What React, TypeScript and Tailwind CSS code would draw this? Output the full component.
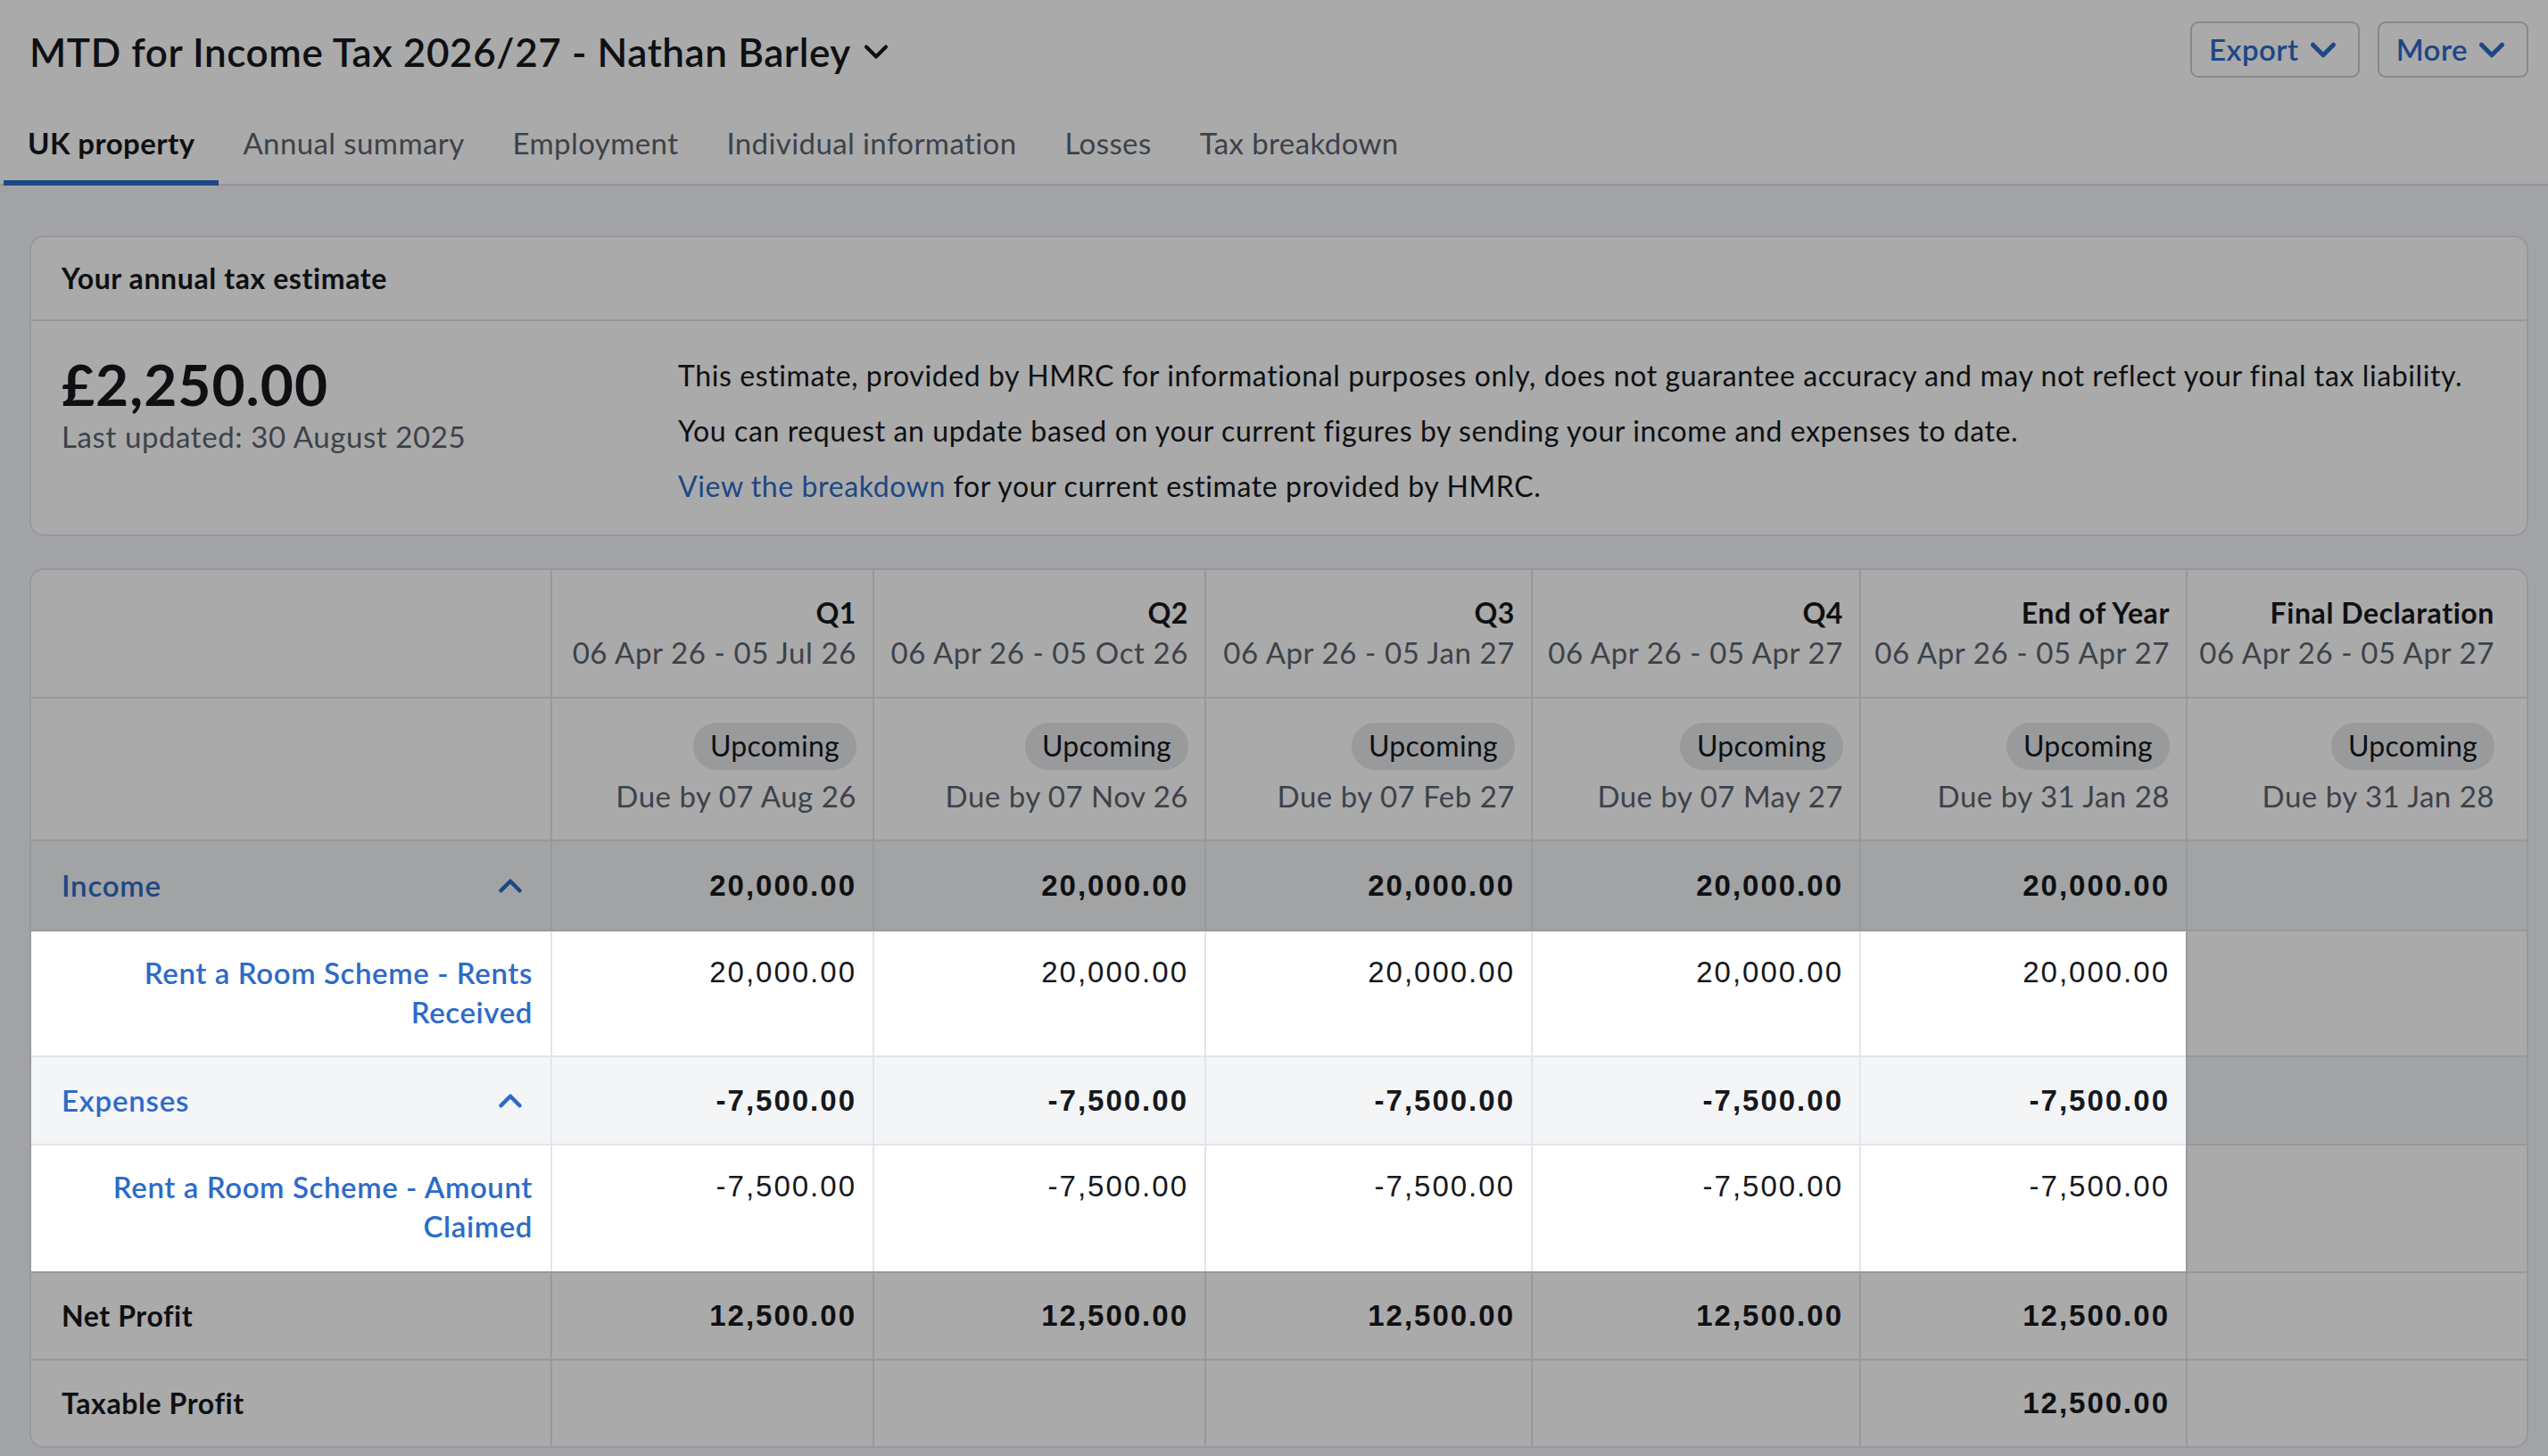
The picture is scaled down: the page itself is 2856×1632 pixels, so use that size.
import React from "react"

const FONT = "font-['Lato','Noto_Sans',sans-serif]"
const NUM = "font-['Liberation_Sans','Arial',sans-serif] text-[33px] tracking-[2px]"
const GRID = "grid grid-cols-[582px_361px_372px_366px_368px_366px_1fr]"

const periods = [
  { name: "Q1", range: "06 Apr 26 - 05 Jul 26", due: "Due by 07 Aug 26" },
  { name: "Q2", range: "06 Apr 26 - 05 Oct 26", due: "Due by 07 Nov 26" },
  { name: "Q3", range: "06 Apr 26 - 05 Jan 27", due: "Due by 07 Feb 27" },
  { name: "Q4", range: "06 Apr 26 - 05 Apr 27", due: "Due by 07 May 27" },
  { name: "End of Year", range: "06 Apr 26 - 05 Apr 27", due: "Due by 31 Jan 28" },
  { name: "Final Declaration", range: "06 Apr 26 - 05 Apr 27", due: "Due by 31 Jan 28" },
]

function Chevron({ up = false, className = "" }: { up?: boolean; className?: string }) {
  return (
    <svg viewBox="0 0 24 24" fill="none" stroke="currentColor" strokeLinecap="round" strokeLinejoin="round" className={className}>
      <path d={up ? "M6 15l6-6 6 6" : "M6 9l6 6 6-6"} />
    </svg>
  )
}

function Tab({ label, active = false }: { label: string; active?: boolean }) {
  return (
    <div
      className={`px-[27px] pb-[22px] -mb-[2px] border-b-[6px] text-[33px] leading-[40px] tracking-[0.4px] ${
        active ? "border-[#2d6bc8] font-bold text-[#16181d]" : "border-transparent text-[#5b6470]"
      }`}
    >
      {label}
    </div>
  )
}

function OutlineButton({ label }: { label: string }) {
  return (
    <button className="h-[63px] flex items-center pl-[19px] pr-[16px] border-2 border-[#c9ccd2] rounded-[9px] text-[33px] tracking-[0.5px] font-semibold text-[#2d6bc8]">
      {label}
      <Chevron className="w-[46px] h-[46px] ml-[4px] stroke-[2.6]" />
    </button>
  )
}

// cells that sit above the dim layer
const lit = "relative z-50"
const line = "border-[#e3e5ea]"
// last column keeps a wider right gutter
const padR = (i: number) => (i === 5 ? "pr-[36px]" : "pr-[18px]")

export default function App() {
  const five = (v: string) => [v, v, v, v, v, null]

  return (
    <div className={`${FONT} min-h-screen bg-[#f3f5f9] text-[#16181d]`}>
      {/* header */}
      <div className="bg-white">
        <div className="flex items-center justify-between pl-[33px] pr-[22px] pt-[24px]">
          <div className="flex items-center">
            <h1 className="text-[44px] leading-[56px] font-semibold tracking-[0.6px] mt-[4px]">MTD for Income Tax 2026/27 - Nathan Barley</h1>
            <Chevron className="w-[44px] h-[44px] ml-[6px] mt-[4px] stroke-[2.2]" />
          </div>
          <div className="flex gap-[20px]">
            <OutlineButton label="Export" />
            <OutlineButton label="More" />
          </div>
        </div>
        <nav className="flex pl-[4px] mt-[53px] border-b-2 border-[#dfe2e6]">
          <Tab label="UK property" active />
          <Tab label="Annual summary" />
          <Tab label="Employment" />
          <Tab label="Individual information" />
          <Tab label="Losses" />
          <Tab label="Tax breakdown" />
        </nav>
      </div>

      <main className="pl-[33px] pr-[22px] pt-[56px] flex flex-col gap-[36px]">
        {/* estimate card */}
        <section className={`bg-white border-2 ${line} rounded-[16px]`}>
          <div className={`h-[94px] flex items-center px-[34px] border-b-2 ${line}`}>
            <h2 className="text-[32px] font-bold leading-[40px] tracking-[0.6px]">Your annual tax estimate</h2>
          </div>
          <div className="flex px-[34px] pt-[30px] pb-[23px]">
            <div className="w-[691px] shrink-0">
              <div className="mt-[10px] text-[64px] leading-[62px] font-bold tracking-[1px]">£2,250.00</div>
              <div className="mt-[7px] text-[33px] leading-[40px] tracking-[0.6px] text-[#5b6470]">Last updated: 30 August 2025</div>
            </div>
            <div className="text-[32px] leading-[62px] tracking-[0.6px]">
              <p>This estimate, provided by HMRC for informational purposes only, does not guarantee accuracy and may not reflect your final tax liability.</p>
              <p>You can request an update based on your current figures by sending your income and expenses to date.</p>
              <p>
                <a className="text-[#2d6bc8]">View the breakdown</a> for your current estimate provided by HMRC.
              </p>
            </div>
          </div>
        </section>

        {/* period table */}
        <section className={`bg-white border-2 ${line} rounded-[16px] overflow-hidden`}>
          <div className={GRID}>
            <div className={`h-[144px] border-b-2 ${line}`} />
            {periods.map((p, i) => (
              <div key={p.name} className={`h-[144px] border-b-2 border-l-2 ${line} flex flex-col items-end justify-center ${padR(i)} pb-[2px]`}>
                <div className="text-[32px] leading-[45px] font-bold tracking-[0.6px]">{p.name}</div>
                <div className="text-[33px] leading-[45px] tracking-[0.6px] text-[#5b6470] whitespace-nowrap">{p.range}</div>
              </div>
            ))}
          </div>

          <div className={GRID}>
            <div className={`h-[160px] border-b-2 ${line}`} />
            {periods.map((p, i) => (
              <div key={p.name} className={`h-[160px] border-b-2 border-l-2 ${line} flex flex-col items-end justify-center ${padR(i)}`}>
                <span className="h-[53px] px-[19px] flex items-center rounded-full bg-[#e5e7eb] text-[32px] tracking-[0.3px]">Upcoming</span>
                <div className="mt-[7px] text-[33px] leading-[45px] tracking-[0.5px] text-[#5b6470] whitespace-nowrap">{p.due}</div>
              </div>
            ))}
          </div>

          {/* Income */}
          <div className={`${GRID} bg-[#f4f5f7]`}>
            <div className={`h-[101px] border-b-2 ${line} flex items-center justify-between pl-[34px] pr-[24px]`}>
              <span className="text-[33px] font-semibold tracking-[0.8px] text-[#2d6bc8]">Income</span>
              <Chevron up className="w-[42px] h-[42px] stroke-[2.6] text-[#2d6bc8]" />
            </div>
            {five("20,000.00").map((v, i) => (
              <div key={i} className={`h-[101px] border-b-2 border-l-2 ${line} flex items-center justify-end pr-[18px] ${NUM} font-bold`}>
                {v}
              </div>
            ))}
          </div>

          {/* Rents received */}
          <div className={GRID}>
            <div className={`${lit} bg-white h-[141px] border-b-2 ${line} pt-[24px] pr-[20px] pl-[60px] text-right text-[33px] leading-[44px] tracking-[0.6px] font-semibold text-[#2d6bc8]`}>
              Rent a Room Scheme - Rents Received
            </div>
            {five("20,000.00").map((v, i) => (
              <div
                key={i}
                className={`${v ? lit : ""} bg-white h-[141px] border-b-2 border-l-2 ${line} pt-[24px] pr-[18px] text-right leading-[44px] ${NUM}`}
              >
                {v}
              </div>
            ))}
          </div>

          {/* Expenses */}
          <div className={GRID}>
            <div className={`${lit} h-[99px] border-b-2 ${line} flex items-center justify-between pl-[34px] pr-[24px] bg-[#f4f5f7]`}>
              <span className="text-[33px] font-semibold tracking-[0.8px] text-[#2d6bc8]">Expenses</span>
              <Chevron up className="w-[42px] h-[42px] stroke-[2.6] text-[#2d6bc8]" />
            </div>
            {five("-7,500.00").map((v, i) => (
              <div
                key={i}
                className={`${v ? lit : ""} bg-[#f4f5f7] h-[99px] border-b-2 border-l-2 ${line} flex items-center justify-end pr-[18px] ${NUM} font-bold`}
              >
                {v}
              </div>
            ))}
          </div>

          {/* Amount claimed */}
          <div className={GRID}>
            <div className={`${lit} bg-white h-[141px] pt-[24px] pr-[20px] pl-[60px] text-right text-[33px] leading-[44px] tracking-[0.6px] font-semibold text-[#2d6bc8]`}>
              Rent a Room Scheme - Amount Claimed
            </div>
            {five("-7,500.00").map((v, i) => (
              <div
                key={i}
                className={`${v ? lit : ""} bg-white h-[141px] border-l-2 ${line} pt-[24px] pr-[18px] text-right leading-[44px] ${NUM}`}
              >
                {v}
              </div>
            ))}
          </div>

          {/* Net profit */}
          <div className={GRID}>
            <div className={`h-[100px] border-t-2 border-b-2 ${line} flex items-center pl-[34px] text-[32px] font-bold tracking-[0.6px]`}>Net Profit</div>
            {five("12,500.00").map((v, i) => (
              <div key={i} className={`h-[100px] border-t-2 border-b-2 border-l-2 ${line} flex items-center justify-end pr-[18px] ${NUM} font-bold`}>
                {v}
              </div>
            ))}
          </div>

          {/* Taxable profit */}
          <div className={GRID}>
            <div className="h-[96px] flex items-center pl-[34px] text-[32px] font-bold tracking-[0.6px]">Taxable Profit</div>
            {[null, null, null, null, "12,500.00", null].map((v, i) => (
              <div key={i} className={`h-[96px] border-l-2 ${line} flex items-center justify-end pr-[18px] ${NUM} font-bold`}>
                {v}
              </div>
            ))}
          </div>
        </section>
      </main>

      {/* dim layer over the page */}
      <div className="fixed inset-0 z-40 bg-black/[0.333]" />
    </div>
  )
}
